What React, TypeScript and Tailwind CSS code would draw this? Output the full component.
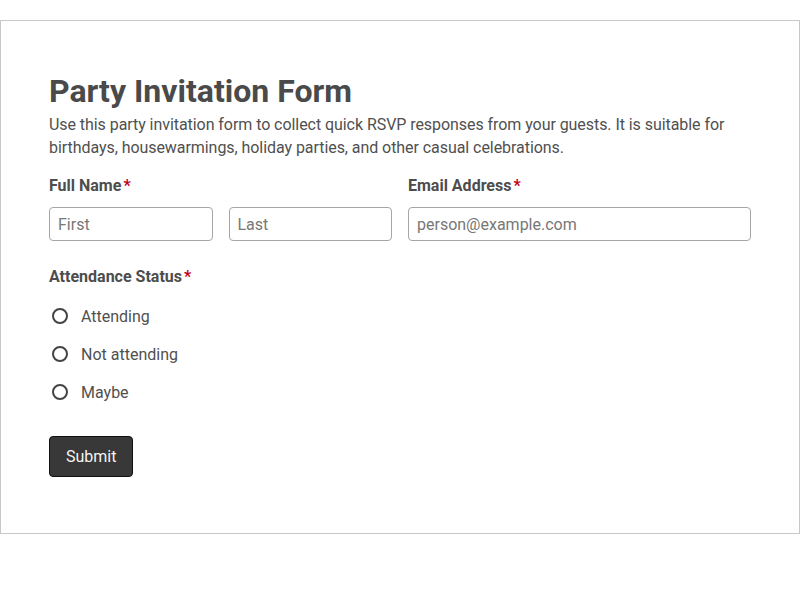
import { useState } from "react";

// Required field marker
function Req() {
  return <span className="text-[#c0001a] ml-[2px]">*</span>;
}

export default function App() {
  const [status, setStatus] = useState<string | null>(null);
  const options = ["Attending", "Not attending", "Maybe"];

  return (
    <div className="min-h-screen bg-white pt-5 text-[#4d4d4d] font-['Roboto',_sans-serif]">
      <div className="border border-[#c8c8c8] px-12 pt-[51px] pb-[56px]">
        <h1 className="text-[32px] leading-[38px] font-bold text-[#4a4a4a]">Party Invitation Form</h1>
        <p className="text-base leading-[23px] mt-[3px] tracking-[-0.06px] text-[#505050]">
          Use this party invitation form to collect quick RSVP responses from your guests. It is suitable for
          birthdays, housewarmings, holiday parties, and other casual celebrations.
        </p>

        <div className="grid grid-cols-2 gap-4 mt-[15px]">
          <div>
            <label className="block text-base leading-[23px] font-bold">
              Full Name<Req />
            </label>
            <div className="grid grid-cols-2 gap-4 mt-[10px]">
              <input
                placeholder="First"
                className="h-[34px] w-full border border-[#a6a6a6] rounded-[4px] px-2 text-base placeholder:text-[#777] outline-none"
              />
              <input
                placeholder="Last"
                className="h-[34px] w-full border border-[#a6a6a6] rounded-[4px] px-2 text-base placeholder:text-[#777] outline-none"
              />
            </div>
          </div>
          <div>
            <label className="block text-base leading-[23px] font-bold">
              Email Address<Req />
            </label>
            <input
              placeholder="person@example.com"
              className="mt-[10px] h-[34px] w-full border border-[#a6a6a6] rounded-[4px] px-2 text-base placeholder:text-[#777] outline-none"
            />
          </div>
        </div>

        <div className="mt-[24px]">
          <div className="text-base leading-[23px] font-bold">
            Attendance Status<Req />
          </div>
          <div className="mt-[9px] flex flex-col">
            {options.map(opt => (
              <label key={opt} className="h-[38px] flex items-center gap-[13px] cursor-pointer">
                <span
                  onClick={() => setStatus(opt)}
                  className="ml-[3px] w-4 h-4 rounded-full border-2 border-[#444] flex items-center justify-center"
                >
                  {status === opt && <span className="w-2 h-2 rounded-full bg-[#444]" />}
                </span>
                <span onClick={() => setStatus(opt)} className="text-base leading-[23px] text-[#505050]">{opt}</span>
              </label>
            ))}
          </div>
        </div>

        <button className="mt-[25px] bg-[#383838] border border-[#111] text-[#f4f4f4] rounded-[4px] px-4 py-[8px] text-base leading-[23px]">
          Submit
        </button>
      </div>
    </div>
  );
}
